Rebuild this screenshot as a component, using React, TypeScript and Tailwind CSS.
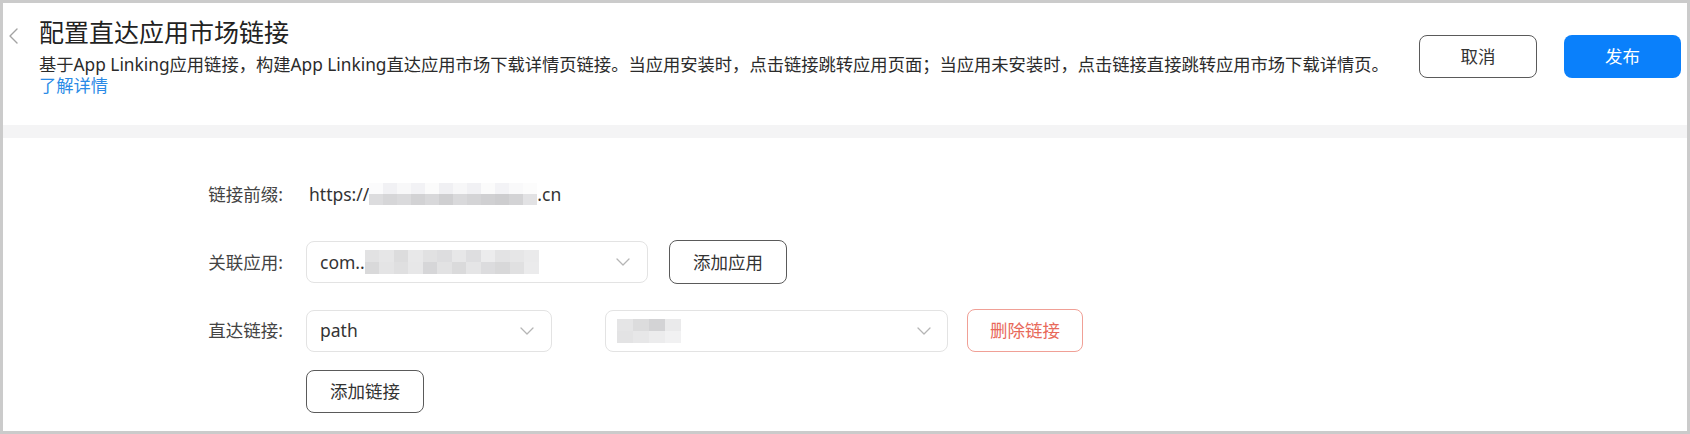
const font = "font-['Noto_Sans','Noto_Sans_CJK_SC',sans-serif]";

function Mosaic({ rows, cell }: { rows: string[][]; cell: string }) {
  return (
    <div className="flex flex-col">
      {rows.map((r, i) => (
        <div key={i} className="flex">
          {r.map((c, j) => (
            <div key={j} className={cell} style={{ backgroundColor: c }} />
          ))}
        </div>
      ))}
    </div>
  );
}

function Chevron() {
  return (
    <svg width="14" height="8" viewBox="0 0 14 8" fill="none">
      <path d="M1 1l6 6 6-6" stroke="#b5b5b5" strokeWidth="1.3" strokeLinecap="round" strokeLinejoin="round" />
    </svg>
  );
}

export default function App() {
  const httpsCells = [
    ['#fbfbfc', '#f1f1f4', '#f8f8f9', '#f2f2f5', '#fbfbfb', '#f0f0f3', '#f7f7f8', '#f1f1f4', '#fbfbfb', '#f3f3f6', '#f9f9fa', '#fcfcfc'],
    ['#dcdcde', '#d6d6d8', '#dadadc', '#d2d2d4', '#d8d8da', '#cfcfd1', '#d9d9db', '#d4d4d6', '#d0d0d2', '#cdcdcf', '#d3d3d5', '#e2e2e4'],
  ];
  const comCells = [
    ['#e2e2e3', '#e6e6e7', '#dcdcdd', '#e8e8e9', '#e1e1e2', '#dddddf', '#e7e7e8', '#dedee0', '#ececed', '#e3e3e4', '#e6e6e7', '#eaeaeb'],
    ['#d9d9da', '#e4e4e5', '#dfdfe0', '#e7e7e8', '#d6d6d8', '#e2e2e3', '#dadadb', '#e5e5e6', '#dcdcde', '#d8d8d9', '#e0e0e1', '#ebebec'],
  ];
  const urlCells = [
    ['#e5e5e6', '#dcdcdd', '#d3d3d5', '#eaeaeb'],
    ['#e3e3e4', '#e7e7e8', '#ececed', '#f1f1f2'],
  ];

  return (
    <div className={`w-[1690px] h-[434px] border-[3px] border-[#cbcbcb] bg-white flex flex-col overflow-hidden text-[#333] ${font}`}>
      <div className="h-[122px] flex items-start justify-between pl-[5px] pr-[6px]">
        <div className="flex items-start">
          <svg className="mt-[25px]" width="10" height="16" viewBox="0 0 10 16" fill="none">
            <path d="M9 1L2 8l7 7" stroke="#a3a3a3" strokeWidth="1.4" strokeLinecap="round" strokeLinejoin="round" />
          </svg>
          <div className="ml-[21px] pt-[12px]">
            <h1 className="text-[25px] leading-[34px] text-[#222]">配置直达应用市场链接</h1>
            <p className="mt-[5px] text-[17.3px] leading-[21px] whitespace-nowrap text-[#2b2b2b]">
              基于App Linking应用链接，构建App Linking直达应用市场下载详情页链接。当应用安装时，点击链接跳转应用页面；当应用未安装时，点击链接直接跳转应用市场下载详情页。
            </p>
            <a className="block text-[17.3px] leading-[21px] text-[#2a8ae6]">了解详情</a>
          </div>
        </div>
        <div className="flex gap-[27px] mt-[32px]">
          <button className="w-[118px] h-[43px] rounded-[8px] border-[1.5px] border-[#5a5a5a] bg-white text-[17.5px] text-[#333]">取消</button>
          <button className="w-[117px] h-[43px] rounded-[8px] bg-[#0a80fb] text-[17.5px] text-white">发布</button>
        </div>
      </div>

      <div className="h-[13px] bg-[#f4f4f5]" />

      <div className="flex-1 pt-[35px] text-[17.5px]">
        <div className="flex items-center h-[42px]">
          <div className="ml-[160px] w-[120px] text-right text-[#444]">链接前缀:</div>
          <div className="ml-[26px] flex items-center text-[#333]">
            <span>https://</span>
            <Mosaic rows={httpsCells} cell="w-[14px] h-[11px]" />
            <span>.cn</span>
          </div>
        </div>

        <div className="flex items-center mt-[25px]">
          <div className="ml-[160px] w-[120px] text-right text-[#444]">关联应用:</div>
          <div className="ml-[23px] w-[342px] h-[42px] rounded-[8px] border border-[#e3e3e3] flex items-center justify-between pl-[13px] pr-[17px]">
            <div className="flex items-center">
              <span>com..</span>
              <Mosaic rows={comCells} cell="w-[14.5px] h-[12px]" />
            </div>
            <Chevron />
          </div>
          <button className="ml-[21px] w-[118px] h-[44px] rounded-[8px] border-[1.5px] border-[#5a5a5a] bg-white text-[#333]">添加应用</button>
        </div>

        <div className="flex items-center mt-[25px]">
          <div className="ml-[160px] w-[120px] text-right text-[#444]">直达链接:</div>
          <div className="ml-[23px] w-[246px] h-[42px] rounded-[8px] border border-[#e3e3e3] flex items-center justify-between pl-[13px] pr-[17px]">
            <span>path</span>
            <Chevron />
          </div>
          <div className="ml-[53px] w-[343px] h-[42px] rounded-[8px] border border-[#e3e3e3] flex items-center justify-between pl-[11px] pr-[16px]">
            <Mosaic rows={urlCells} cell="w-[16px] h-[12px]" />
            <Chevron />
          </div>
          <button className="ml-[19px] w-[116px] h-[43px] rounded-[8px] border-[1.5px] border-[#f0a096] bg-white text-[#e8695a]">删除链接</button>
        </div>

        <div className="mt-[18px] ml-[303px]">
          <button className="w-[118px] h-[43px] rounded-[8px] border-[1.5px] border-[#5a5a5a] bg-white text-[#333]">添加链接</button>
        </div>
      </div>
    </div>
  );
}
